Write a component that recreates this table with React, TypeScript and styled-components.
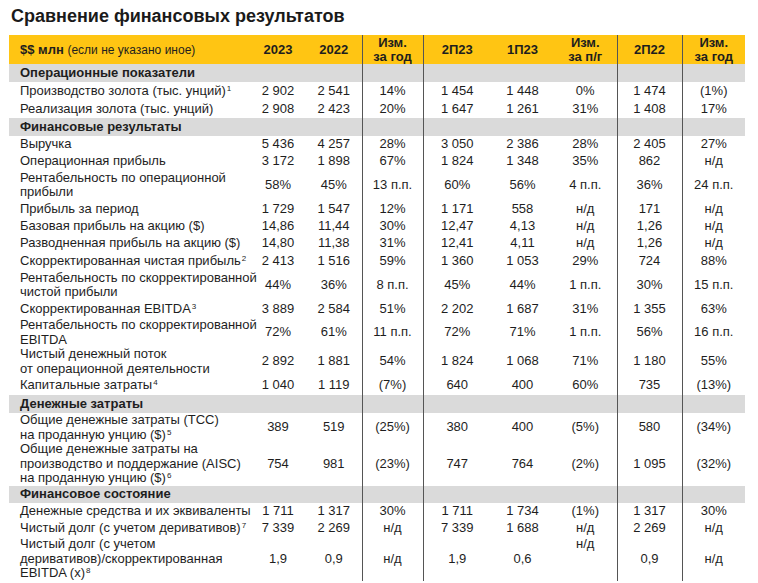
import React from "react";
import styled, { createGlobalStyle } from "styled-components";

const Global = createGlobalStyle`
  html, body { margin: 0; padding: 0; background: #ffffff; }
  body { font-family: "Liberation Sans", Arial, sans-serif; color: #1e1e1e; }
`;

const Page = styled.div`
  width: 758px;
  height: 583px;
  padding: 5px 0 0 9px;
  box-sizing: border-box;
  overflow: hidden;
`;

const Title = styled.h1`
  margin: 0 0 8px 2px;
  font-size: 18px;
  line-height: 22px;
  font-weight: 700;
  color: #1a1a1a;
`;

const Table = styled.table`
  border-collapse: collapse;
  table-layout: fixed;
  width: 736px;
  font-size: 13px;
  line-height: 14.5px;
`;

const HeadRow = styled.tr`
  height: 29px;
  background: #ffc513;
`;

const Th = styled.th<{ $line?: boolean; $left?: boolean }>`
  padding: 0;
  font-weight: 700;
  font-size: 13px;
  line-height: 14px;
  text-align: ${(p) => (p.$left ? "left" : "center")};
  padding-left: ${(p) => (p.$left ? "11px" : "0")};
  border-left: ${(p) => (p.$line ? "1px solid #555" : "none")};
  white-space: nowrap;
`;

const Note = styled.span`
  font-weight: 400;
  font-size: 12px;
`;

const SectionRow = styled.tr`
  background: #dadada;
`;

const DataRow = styled.tr``;

const Td = styled.td<{ $line?: boolean; $top?: boolean }>`
  padding: 0;
  text-align: center;
  vertical-align: ${(p) => (p.$top ? "top" : "middle")};
  border-left: ${(p) => (p.$line ? "1px solid #555" : "none")};
  white-space: nowrap;
`;

const LabelTd = styled.td<{ $bold?: boolean }>`
  padding: 0 0 0 11px;
  text-align: left;
  vertical-align: middle;
  font-weight: ${(p) => (p.$bold ? 700 : 400)};
  white-space: nowrap;
`;

const Sup = styled.sup`
  font-size: 8px;
  line-height: 0;
  vertical-align: 4px;
  margin-left: 1px;
`;

const lineCols = [false, false, true, true, false, false, true, true];
const widths = [241, 56, 56, 61, 68, 63, 63, 65, 63];

type Row =
  | { kind: "section"; label: string; h: number }
  | {
      kind: "data";
      label: React.ReactNode;
      values: string[];
      h: number;
      topCol?: number;
    };

const L = (lines: string[], sup?: string) => (
  <>
    {lines.map((l, i) => (
      <React.Fragment key={i}>
        {i > 0 && <br />}
        {l}
        {sup && i === lines.length - 1 && <Sup>{sup}</Sup>}
      </React.Fragment>
    ))}
  </>
);

const rows: Row[] = [
  { kind: "section", label: "Операционные показатели", h: 18 },
  { kind: "data", label: L(["Производство золота (тыс. унций)"], "1"), values: ["2 902", "2 541", "14%", "1 454", "1 448", "0%", "1 474", "(1%)"], h: 18 },
  { kind: "data", label: L(["Реализация золота (тыс. унций)"]), values: ["2 908", "2 423", "20%", "1 647", "1 261", "31%", "1 408", "17%"], h: 18 },
  { kind: "section", label: "Финансовые результаты", h: 18 },
  { kind: "data", label: L(["Выручка"]), values: ["5 436", "4 257", "28%", "3 050", "2 386", "28%", "2 405", "27%"], h: 17 },
  { kind: "data", label: L(["Операционная прибыль"]), values: ["3 172", "1 898", "67%", "1 824", "1 348", "35%", "862", "н/д"], h: 17 },
  { kind: "data", label: L(["Рентабельность по операционной", "прибыли"]), values: ["58%", "45%", "13 п.п.", "60%", "56%", "4 п.п.", "36%", "24 п.п."], h: 30 },
  { kind: "data", label: L(["Прибыль за период"]), values: ["1 729", "1 547", "12%", "1 171", "558", "н/д", "171", "н/д"], h: 18 },
  { kind: "data", label: L(["Базовая прибыль на акцию ($)"]), values: ["14,86", "11,44", "30%", "12,47", "4,13", "н/д", "1,26", "н/д"], h: 17 },
  { kind: "data", label: L(["Разводненная прибыль на акцию ($)"]), values: ["14,80", "11,38", "31%", "12,41", "4,11", "н/д", "1,26", "н/д"], h: 17 },
  { kind: "data", label: L(["Скорректированная чистая прибыль"], "2"), values: ["2 413", "1 516", "59%", "1 360", "1 053", "29%", "724", "88%"], h: 18 },
  { kind: "data", label: L(["Рентабельность по скорректированной", "чистой прибыли"]), values: ["44%", "36%", "8 п.п.", "45%", "44%", "1 п.п.", "30%", "15 п.п."], h: 30 },
  { kind: "data", label: L(["Скорректированная EBITDA"], "3"), values: ["3 889", "2 584", "51%", "2 202", "1 687", "31%", "1 355", "63%"], h: 18 },
  { kind: "data", label: L(["Рентабельность по скорректированной", "EBITDA"]), values: ["72%", "61%", "11 п.п.", "72%", "71%", "1 п.п.", "56%", "16 п.п."], h: 28 },
  { kind: "data", label: L(["Чистый денежный поток", "от операционной деятельности"]), values: ["2 892", "1 881", "54%", "1 824", "1 068", "71%", "1 180", "55%"], h: 28 },
  { kind: "data", label: L(["Капитальные затраты"], "4"), values: ["1 040", "1 119", "(7%)", "640", "400", "60%", "735", "(13%)"], h: 19 },
  { kind: "section", label: "Денежные затраты", h: 18 },
  { kind: "data", label: L(["Общие денежные затраты (TCC)", "на проданную унцию ($)"], "5"), values: ["389", "519", "(25%)", "380", "400", "(5%)", "580", "(34%)"], h: 29 },
  { kind: "data", label: L(["Общие денежные затраты на", "производство и поддержание (AISC)", "на проданную унцию ($)"], "6"), values: ["754", "981", "(23%)", "747", "764", "(2%)", "1 095", "(32%)"], h: 44 },
  { kind: "section", label: "Финансовое состояние", h: 17 },
  { kind: "data", label: L(["Денежные средства и их эквиваленты"]), values: ["1 711", "1 317", "30%", "1 711", "1 734", "(1%)", "1 317", "30%"], h: 17 },
  { kind: "data", label: L(["Чистый долг (с учетом деривативов)"], "7"), values: ["7 339", "2 269", "н/д", "7 339", "1 688", "н/д", "2 269", "н/д"], h: 17 },
  { kind: "data", label: L(["Чистый долг (с учетом", "деривативов)/скорректированная", "EBITDA (x)"], "8"), values: ["1,9", "0,9", "н/д", "1,9", "0,6", "н/д", "0,9", "н/д"], h: 43, topCol: 5 },
];

export default function App() {
  return (
    <>
      <Global />
      <Page>
        <Title>Сравнение финансовых результатов</Title>
        <Table>
          <colgroup>
            {widths.map((w, i) => (
              <col key={i} style={{ width: w }} />
            ))}
          </colgroup>
          <thead>
            <HeadRow>
              <Th $left>
                $$ млн <Note>(если не указано иное)</Note>
              </Th>
              <Th>2023</Th>
              <Th>2022</Th>
              <Th $line>
                Изм.
                <br />
                за год
              </Th>
              <Th $line>2П23</Th>
              <Th>1П23</Th>
              <Th>
                Изм.
                <br />
                за п/г
              </Th>
              <Th $line>2П22</Th>
              <Th $line>
                Изм.
                <br />
                за год
              </Th>
            </HeadRow>
          </thead>
          <tbody>
            {rows.map((r, i) =>
              r.kind === "section" ? (
                <SectionRow key={i} style={{ height: r.h }}>
                  <LabelTd $bold>{r.label}</LabelTd>
                  {lineCols.map((ln, j) => (
                    <Td key={j} $line={ln} />
                  ))}
                </SectionRow>
              ) : (
                <DataRow key={i} style={{ height: r.h }}>
                  <LabelTd>{r.label}</LabelTd>
                  {r.values.map((v, j) => (
                    <Td key={j} $line={lineCols[j]} $top={r.topCol === j}>
                      {v}
                    </Td>
                  ))}
                </DataRow>
              )
            )}
          </tbody>
        </Table>
      </Page>
    </>
  );
}
